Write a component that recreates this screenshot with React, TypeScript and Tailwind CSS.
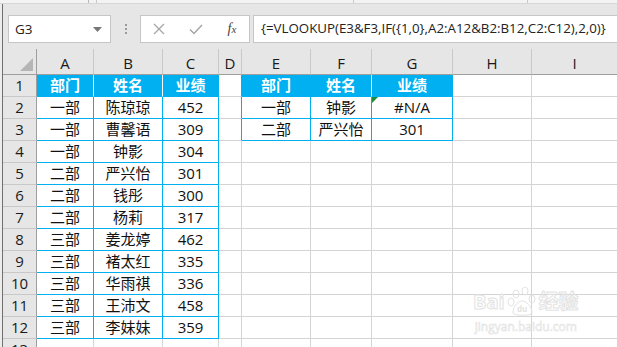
import React from "react";

const BLUE = "#00b0f0";
const GRID = "#d4d4d4";

const cols = ["A", "B", "C", "D", "E", "F", "G", "H", "I"];

const data: string[][] = [
  ["部门", "姓名", "业绩", "", "部门", "姓名", "业绩", "", ""],
  ["一部", "陈琼琼", "452", "", "一部", "钟影", "#N/A", "", ""],
  ["一部", "曹馨语", "309", "", "二部", "严兴怡", "301", "", ""],
  ["一部", "钟影", "304", "", "", "", "", "", ""],
  ["二部", "严兴怡", "301", "", "", "", "", "", ""],
  ["二部", "钱彤", "300", "", "", "", "", "", ""],
  ["二部", "杨莉", "317", "", "", "", "", "", ""],
  ["三部", "姜龙婷", "462", "", "", "", "", "", ""],
  ["三部", "褚太红", "335", "", "", "", "", "", ""],
  ["三部", "华雨祺", "336", "", "", "", "", "", ""],
  ["三部", "王沛文", "458", "", "", "", "", "", ""],
  ["三部", "李妹妹", "359", "", "", "", "", "", ""],
  ["", "", "", "", "", "", "", "", ""],
];

function inT1(r: number, c: number) {
  return c >= 0 && c <= 2 && r >= 1 && r <= 12;
}
function inT2(r: number, c: number) {
  return c >= 4 && c <= 6 && r >= 1 && r <= 3;
}

export default function App() {
  const font = { fontFamily: '"Open Sans", "Noto Sans CJK SC", sans-serif' };
  return (
    <div className="w-[617px] h-[347px] overflow-hidden bg-[#e6e6e6] flex flex-col" style={font}>
      {/* top ribbon remnant */}
      <div className="h-[4px] bg-[#f3f3f3] border-b border-[#d6d6d6] relative shrink-0">
        <div className="absolute left-[88px] top-0 w-px h-[3px] bg-[#b8b8b8]" />
        <div className="absolute left-[96px] top-0 w-px h-[3px] bg-[#c8c8c8]" />
        <div className="absolute left-[353px] top-0 w-px h-[3px] bg-[#c8c8c8]" />
        <div className="absolute left-[527px] top-0 w-px h-[3px] bg-[#c8c8c8]" />
      </div>
      <div className="flex flex-1 min-h-0">
        <div className="w-[2px] bg-[#ececec] shrink-0" />
        <div className="w-px bg-[#707070] shrink-0" />
        <div className="flex-1 flex flex-col min-w-0">
          {/* formula bar */}
          <div className="h-[45px] flex items-start pt-[11px] shrink-0">
            <div className="ml-[5px] w-[103px] h-[28px] bg-white border border-[#c6c6c6] flex items-center justify-between pl-[6px] pr-[8px]">
              <span className="text-[13.5px] text-[#222]">G3</span>
              <svg width="9" height="5" viewBox="0 0 9 5">
                <path d="M0 0 L9 0 L4.5 5 Z" fill="#777" />
              </svg>
            </div>
            <div className="w-[29px] h-[28px] flex flex-col items-center justify-center gap-[2px]">
              <div className="w-[2px] h-[2px] bg-[#9a9a9a]" />
              <div className="w-[2px] h-[2px] bg-[#9a9a9a]" />
              <div className="w-[2px] h-[2px] bg-[#9a9a9a]" />
            </div>
            <div className="w-[110px] h-[28px] bg-white border border-[#c6c6c6] flex items-center">
              <div className="w-[36px] flex justify-center">
                <svg width="12" height="12" viewBox="0 0 12 12">
                  <path d="M1 1 L11 11 M11 1 L1 11" stroke="#a6a6a6" strokeWidth="1.3" />
                </svg>
              </div>
              <div className="w-[38px] flex justify-center">
                <svg width="14" height="11" viewBox="0 0 14 11">
                  <path d="M1 5.5 L5 9.5 L13 1" stroke="#a6a6a6" strokeWidth="1.5" fill="none" />
                </svg>
              </div>
              <div className="w-[34px] flex justify-center">
                <span className="text-[14px] italic text-[#444] leading-none" style={{ fontFamily: '"Liberation Serif", serif' }}>
                  f<span className="text-[11px]">x</span>
                </span>
              </div>
            </div>
            <div className="ml-[3px] flex-1 h-[28px] bg-white border border-r-0 border-[#c6c6c6] flex items-center pl-[7px]">
              <span className="text-[13.3px] text-[#222] whitespace-nowrap">
                {"{=VLOOKUP(E3&F3,IF({1,0},A2:A12&B2:B12,C2:C12),2,0)}"}
              </span>
            </div>
          </div>
          {/* sheet */}
          <div className="grid grid-cols-[34px_57px_69px_56px_23px_69px_61px_81px_79px_1fr] grid-rows-[26px_repeat(13,22px)] relative">
            {/* corner */}
            <div className="bg-[#e6e6e6] border-r border-b border-[#9e9e9e] relative">
              <svg className="absolute right-[3px] bottom-[3px]" width="13" height="13" viewBox="0 0 13 13">
                <path d="M13 0 L13 13 L0 13 Z" fill="#b5b5b5" />
              </svg>
            </div>
            {cols.map((c, i) => (
              <div
                key={c}
                className={`bg-[#e6e6e6] border-b border-b-[#9e9e9e] flex items-center justify-center text-[15px] text-[#1a1a1a] pt-[3px] ${
                  i < 8 ? "border-r border-r-[#c8c8c8]" : ""
                }`}
              >
                {c}
              </div>
            ))}
            {data.map((row, ri) => {
              const r = ri + 1;
              return (
                <React.Fragment key={r}>
                  <div className="bg-[#e6e6e6] border-r border-r-[#9e9e9e] border-b border-b-[#c8c8c8] flex items-center justify-center text-[15px] text-[#1a1a1a]">
                    {r}
                  </div>
                  {row.map((v, c) => {
                    const header = r === 1 && (c <= 2 || (c >= 4 && c <= 6));
                    const tbl = inT1(r, c) || inT2(r, c);
                    let rc = GRID;
                    if (header && (c === 0 || c === 1 || c === 5)) rc = "#ffffff";
                    else if (tbl) rc = BLUE;
                    else if (c === 3 && r <= 3) rc = BLUE;
                    let bc = GRID;
                    if (tbl) bc = BLUE;
                    return (
                      <div
                        key={c}
                        className={`relative flex items-center justify-center text-[15px] ${
                          header ? "bg-[#00b0f0] text-white font-bold" : "bg-white text-[#111]"
                        }`}
                        style={{
                          borderRight: c < 8 ? `1px solid ${rc}` : undefined,
                          borderBottom: `1px solid ${bc}`,
                        }}
                      >
                        {r === 2 && c === 6 && (
                          <div className="absolute left-0 top-0 w-0 h-0 border-t-[6px] border-t-[#1d8a3c] border-r-[6px] border-r-transparent" />
                        )}
                        {v}
                      </div>
                    );
                  })}
                </React.Fragment>
              );
            })}
            {/* watermark */}
            <div className="absolute left-[470px] top-[238px] flex flex-col items-center pointer-events-none">
              <div className="flex items-center gap-[2px] text-[20px] font-bold leading-none text-transparent" style={{ WebkitTextStroke: "1px #e3e3e3" }}>
                <span>Bai</span>
                <svg width="30" height="30" viewBox="0 0 30 30">
                  <g fill="none" stroke="#e3e3e3" strokeWidth="1">
                    <ellipse cx="9" cy="7" rx="3" ry="4" />
                    <ellipse cx="18" cy="4" rx="3" ry="4" />
                    <ellipse cx="4" cy="15" rx="3" ry="4" />
                    <ellipse cx="25" cy="12" rx="3" ry="4" />
                    <path d="M6 26 C6 18 12 14 15 14 C19 14 25 19 25 26 C25 29 6 29 6 26 Z" />
                  </g>
                  <text x="10" y="25" fontSize="8" fill="#e3e3e3">du</text>
                </svg>
                <span>经验</span>
              </div>
              <div className="text-[12px] leading-none mt-[4px] text-transparent" style={{ WebkitTextStroke: "0.6px #e3e3e3" }}>
                jingyan.baidu.com
              </div>
            </div>
          </div>
        </div>
      </div>
    </div>
  );
}
